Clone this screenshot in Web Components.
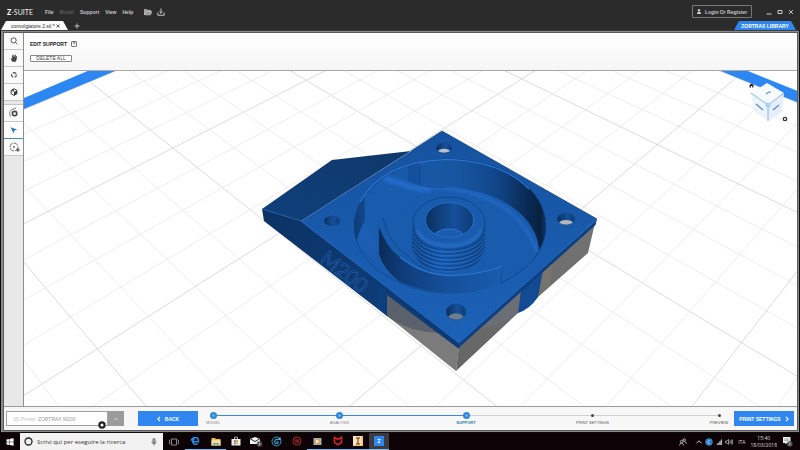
<!DOCTYPE html>
<html lang="en">
<head>
<meta charset="utf-8">
<title>Z-SUITE</title>
<style>
    html, body { margin: 0; height: 100%; }
    body {
        display: flex;
        flex-direction: column;
        overflow: hidden;
        background: #2b2b2b;
        font-family: "Liberation Sans", Arial, sans-serif;
        font-size: 5px;
        line-height: 8px;
    }
    app-window { flex: 1; min-height: 0; }
</style>
</head>
<body>
    <title-bar></title-bar>
    <tab-strip></tab-strip>
    <app-window>
        <tool-rail slot="rail"></tool-rail>
        <edit-header slot="header"></edit-header>
        <model-viewport slot="view"></model-viewport>
        <nav-cube slot="overlay"></nav-cube>
        <step-bar slot="footer"></step-bar>
    </app-window>
    <task-bar></task-bar>

<script>
// Shared button reset, every shadow root gets it
const RESET = `
    :host, *, *::before, *::after { box-sizing: border-box; }
    button, input, select {
        font: inherit; color: inherit; line-height: inherit;
        margin: 0; padding: 0; border: 0; border-radius: 0;
        background: none; outline: 0; appearance: none;
        white-space: nowrap;
    }
    a { color: inherit; text-decoration: none; }
    svg { display: block; }
`;

function define(name, css, html) {
    customElements.define(name, class extends HTMLElement {
        constructor() {
            super();
            this.attachShadow({ mode: 'open' });
            this.shadowRoot.innerHTML = `<style>${RESET}${css}</style>${typeof html === 'function' ? html() : html}`;
        }
    });
}

define('title-bar', `
    :host { display: flex; align-items: center; height: 21px; padding: 2px 6px 0 7px; background: #2b2b2b; color: #c4c4c4; }
    .logo { font-family: "Lato", "Liberation Sans", sans-serif; font-size: 7px; color: #eee; margin-right: 12px; }
    .logo b { font-weight: 900; color: #fff; }
    nav { display: flex; gap: 6px; font-weight: 700; }
    nav .off { color: #5c5c5c; }
    .files { display: flex; gap: 5px; margin-left: 11px; }
    .login { display: flex; align-items: center; justify-content: center; gap: 4px; width: 60px; height: 13px; margin-left: auto; border: 1px solid #777; border-radius: 1px; font-weight: 700; }
    .win { display: flex; gap: 5px; margin-left: 14px; }
`, `
    <div class="logo"><b>Z</b>-SUITE</div>
    <nav>
        <button>File</button><button class="off">Model</button><button>Support</button><button>View</button><button>Help</button>
    </nav>
    <div class="files">
        <button aria-label="Open"><svg width="8" height="8" viewBox="0 0 8 8"><path d="M.5 6.8V1.4h2.2l.8.9h3v1.1M.7 6.8l1.5-3.2h5.6L6.5 6.8z" fill="#999" stroke="#c9c9c9" stroke-width=".7"/></svg></button>
        <button aria-label="Save"><svg width="8" height="8" viewBox="0 0 8 8" fill="none" stroke="#c9c9c9"><path d="M.8 4.6v2.6h6.4V4.6M4 .5v4.6M2.4 3.6 4 5.2l1.6-1.6"/></svg></button>
    </div>
    <button class="login">
        <svg width="4" height="5" viewBox="0 0 4 5" fill="#d0d0d0"><circle cx="2" cy="1.2" r="1.2"/><path d="M0 5c0-1.4.6-2.2 2-2.2S4 3.6 4 5z"/></svg>
        Login Or Register
    </button>
    <div class="win">
        <button aria-label="Minimize"><svg width="6" height="6" viewBox="0 0 6 6"><path d="M.5 5h5" stroke="#ccc"/></svg></button>
        <button aria-label="Maximize"><svg width="6" height="6" viewBox="0 0 6 6"><path d="M1 1.5h4v3H1z" fill="none" stroke="#ccc"/></svg></button>
        <button aria-label="Close"><svg width="6" height="6" viewBox="0 0 6 6"><path d="m1 1 4 4m0-4L1 5" stroke="#ccc" stroke-width=".9"/></svg></button>
    </div>
`);

define('tab-strip', `
    :host { display: flex; align-items: stretch; height: 9px; padding: 0 4px 0 1px; background: #2b2b2b; }
    .tab { display: flex; align-items: center; justify-content: space-between; width: 67px; padding: 0 8px 0 10px; white-space: nowrap; background: #fafafa; color: #333; clip-path: polygon(5px 0, 62px 0, 100% 100%, 0 100%); }
    .plus { margin-left: 6px; }
    .library { display: flex; align-items: center; justify-content: center; width: 62px; margin-left: auto; background: #2e86ee; color: #fff; font-weight: 700; white-space: nowrap; clip-path: polygon(5px 0, 57px 0, 100% 100%, 0 100%); }
`, `
    <div class="tab">convolgiatore 2.stl *
        <button aria-label="Close tab"><svg width="4" height="4" viewBox="0 0 4 4"><path d="m.5.5 3 3m0-3-3 3" stroke="#333" stroke-width=".8"/></svg></button>
    </div>
    <button class="plus" aria-label="New tab"><svg width="6" height="6" viewBox="0 0 6 6"><path d="M3 .5v5M.5 3h5" stroke="#ccc" stroke-width=".9"/></svg></button>
    <a class="library" href="#library">ZORTRAX LIBRARY</a>
`);

define('app-window', `
    :host { display: flex; flex-direction: column; border: 1px solid #0c0c0c; border-top-color: #3a3a3a; background: #8a8a8a; padding: 1px 1px 1px 2px; }
    .inner { flex: 1; min-height: 0; display: flex; flex-direction: column; border: 1px solid #5a5a5a; background: #fff; }
    .main { flex: 1; min-height: 0; display: flex; }
    .work { flex: 1; min-width: 0; display: flex; flex-direction: column; border-left: 1px solid #8e8e8e; position: relative; }
    ::slotted([slot=view]) { flex: 1; min-height: 0; }
    ::slotted([slot=overlay]) { position: absolute; right: 7px; top: 47px; }
`, `
    <div class="inner">
        <div class="main">
            <slot name="rail"></slot>
            <div class="work"><slot name="header"></slot><slot name="view"></slot><slot name="overlay"></slot></div>
        </div>
        <slot name="footer"></slot>
    </div>
`);

define('tool-rail', `
    :host { display: flex; flex-direction: column; width: 19px; background: #e8e8e8; }
    button { display: flex; align-items: center; justify-content: center; height: 17px; background: #fafafa; border-bottom: 1px solid #c6c6c6; }
    .gap { height: 4px; border-bottom: 1px solid #c6c6c6; }
    .on { border-bottom: 1px solid #3f93b5; background: #fff; }
`, `
    <button aria-label="Zoom"><svg width="10" height="10" viewBox="0 0 10 10" fill="none" stroke="#444" stroke-width=".9"><circle cx="4.6" cy="4.4" r="2.6"/><path d="m6.5 6.4 1.8 1.9"/></svg></button>
    <button aria-label="Pan"><svg width="10" height="10" viewBox="0 0 10 10" fill="#444"><path d="M3.3 8.8 1.5 5.6l.8-.4.9.9L3 2.3l.8-.1.5 2.2.1-3h.8l.3 3 .6-2.7.8.1-.2 3 .8-1.8.7.3-.6 3.3-.9 2.2z"/></svg></button>
    <button aria-label="Rotate"><svg width="10" height="10" viewBox="0 0 10 10" fill="none" stroke="#444" stroke-width="1.1"><circle cx="5" cy="5" r="2.400" stroke-dasharray="3.770 1.250" stroke-dashoffset="1"/></svg></button>
    <button aria-label="View"><svg width="10" height="10" viewBox="0 0 10 10"><path d="m5 1.8 2.9 1.6v3.3L5 8.4 2.1 6.7V3.4z" fill="#fff" stroke="#333"/><path d="M5 5 7.9 3.4v3.3L5 8.4z" fill="#333"/><path d="m2.1 3.4 2.9-1.6L5 5z" fill="#555"/></svg></button>
    <div class="gap"></div>
    <button aria-label="Support settings"><svg width="12" height="12" viewBox="0 0 12 12" fill="none" stroke="#444"><circle cx="6.6" cy="6.6" r="2.2" stroke-width="1.6"/><path d="M2.6 9.6A4.8 4.8 0 0 1 6 1.9M6 1.9l2-.9" stroke-width=".7"/></svg></button>
    <button class="on" aria-label="Select"><svg width="10" height="10" viewBox="0 0 10 10"><path d="m1.600 2.200 6.600 2.400-2.700.9-1 2.900z" fill="#2f7fb0"/></svg></button>
    <button aria-label="Add support"><svg width="12" height="12" viewBox="0 0 12 12" fill="none" stroke="#555" stroke-width=".8"><circle cx="6" cy="6" r="4" stroke-dasharray="5 1"/><circle cx="6" cy="6" r=".5" fill="#333"/><path d="M8 9h4M10 7v4" stroke="#333"/></svg></button>
`);

define('edit-header', `
    :host { display: flex; flex-direction: column; align-items: flex-start; gap: 7px; height: 38px; padding: 7px 6px 0; background: linear-gradient(#fff, #f6f6f6); border-bottom: 1px solid #a8a8a8; }
    h1 { display: flex; align-items: center; gap: 4px; margin: 0; font-size: 5px; line-height: 8px; color: #222; }
    .help { width: 6px; height: 6px; border: 1px solid #777; border-radius: 1px; font-size: 4px; line-height: 4px; color: #333; }
    .del { width: 42px; height: 7px; border: 1px solid #888; border-radius: 1px; background: #fff; line-height: 5px; color: #444; }
`, `
    <h1>EDIT SUPPORT <button class="help" aria-label="Help">?</button></h1>
    <button class="del">DELETE ALL</button>
`);

// The build plate in perspective. Each line family runs to its own
// vanishing point and crosses y = 405 at even steps.
function plateLines(vx, vy, start, step, from, to) {
    let minor = '';
    let major = '';
    for (let i = from; i <= to; i++) {
        const x = start + step * i;
        const t = (60 - vy) / (405 - vy);
        const u = (600 - vy) / (405 - vy);
        const d = `M${(vx + (x - vx) * t).toFixed(1)} 60L${(vx + (x - vx) * u).toFixed(1)} 600`;
        if (i % 4 === 0) major += d; else minor += d;
    }
    return `<path d="${minor}" stroke="#e9e9e9"/><path d="${major}" stroke="#d2d2d2"/>`;
}

function thread(y) {
    return `<path d="M413 ${y}C416 ${y + 27} 482 ${y + 27} 485 ${y}" stroke="#0d3f80" stroke-width="1.2"/>
            <path d="M413 ${y + 2}C416 ${y + 28} 482 ${y + 28} 485 ${y + 2}" stroke="#2a74d0" stroke-width=".7"/>`;
}

function screwHole(x, y, rx, ry, bottom) {
    return `<clipPath id="h${x}"><ellipse cx="${x}" cy="${y}" rx="${rx}" ry="${ry}"/></clipPath>
        <ellipse cx="${x}" cy="${y}" rx="${rx}" ry="${ry}" fill="url(#hole)"/>
        ${bottom ? `<ellipse cx="${x}" cy="${y + ry * .8}" rx="${rx * .8}" ry="${ry * .65}" fill="${bottom}" clip-path="url(#h${x})"/>` : ''}
        <ellipse cx="${x}" cy="${y}" rx="${rx}" ry="${ry}" fill="none" stroke="#124b93" stroke-width=".6"/>`;
}

define('model-viewport', `
    :host { display: block; overflow: hidden; background: #fff; }
    svg { width: 100%; height: 100%; }
    text { font: 20px "Lato", "Liberation Sans", sans-serif; }
`, () => `
    <svg viewBox="24 70 773 337" preserveAspectRatio="xMidYMid slice">
        <defs>
            <linearGradient id="top" x1="0" y1="0" x2="0" y2="1"><stop offset="0" stop-color="#16529f"/><stop offset="1" stop-color="#1b62b8"/></linearGradient>
            <linearGradient id="ramp" x1="0" y1="1" x2="1" y2="0"><stop offset="0" stop-color="#0f3f7b"/><stop offset="1" stop-color="#0f3767"/></linearGradient>
            <linearGradient id="side" gradientUnits="userSpaceOnUse" x1="262" y1="210" x2="458" y2="345"><stop offset="0" stop-color="#0c3263"/><stop offset=".5" stop-color="#0d3a74"/><stop offset="1" stop-color="#0d3d7a"/></linearGradient>
            <linearGradient id="wall" gradientUnits="userSpaceOnUse" x1="354" y1="0" x2="546" y2="0"><stop offset="0" stop-color="#0d3b75"/><stop offset=".06" stop-color="#134a90"/><stop offset=".14" stop-color="#195aab"/><stop offset=".55" stop-color="#17559f"/><stop offset=".74" stop-color="#11468a"/><stop offset=".9" stop-color="#0a2b56"/><stop offset=".97" stop-color="#08213f"/><stop offset="1" stop-color="#0c3467"/></linearGradient>
            <linearGradient id="scroll" gradientUnits="userSpaceOnUse" x1="379" y1="0" x2="502" y2="0"><stop offset="0" stop-color="#0b2c58"/><stop offset=".18" stop-color="#0e3c79"/><stop offset=".55" stop-color="#154f9a"/><stop offset="1" stop-color="#1a5cae"/></linearGradient>
            <linearGradient id="hole"><stop offset="0" stop-color="#0b2f5e"/><stop offset=".6" stop-color="#15509a"/><stop offset="1" stop-color="#0d3a74"/></linearGradient>
            <linearGradient id="body"><stop offset="0" stop-color="#103f7e"/><stop offset=".4" stop-color="#1c63ba"/><stop offset="1" stop-color="#124888"/></linearGradient>
            <linearGradient id="gR" gradientUnits="userSpaceOnUse" x1="456" y1="360" x2="595" y2="225"><stop offset="0" stop-color="#666"/><stop offset="1" stop-color="#737373"/></linearGradient>
            <filter id="soft" x="-20%" y="-50%" width="140%" height="200%"><feGaussianBlur stdDeviation="1.6"/></filter>
            <clipPath id="bowl"><ellipse cx="450" cy="226" rx="96" ry="67"/></clipPath>
            <clipPath id="hub"><ellipse cx="449.500" cy="220" rx="24" ry="17.500"/></clipPath>
            <clipPath id="barrel"><path d="M413 222 412 248Q418 271 449 272 480 271 485 248V222z"/></clipPath>
        </defs>

        <g fill="none" stroke-width=".8">
            ${plateLines(-587, -458, 145, 87.5, -8, 24)}
            ${plateLines(1366, -458, 9, 85.5, -20, 20)}
        </g>
        <path d="M24 60v42L112 60zM720 60h90v40z" fill="#fff"/>
        <path d="M20 99.700 110 61.500h28L20 110.700zM700 62.500l100 41V92L728 63z" fill="#2d87f2"/>

        <!-- supports -->
        <path d="M386 290 459 346 456 371 386 315z" fill="#7b7b7b"/>
        <path d="M386 290 459 346 446 331Q414 334 387 316z" fill="#54606e"/>
        <path d="M387 294v22q22 17 57 17z" fill="#5a616b"/>
        <path d="M456 371 459 345 595 223 588 253 538 297 518 313z" fill="url(#gR)"/>
        <path d="M521 292 516 315Q496 327 480 328z" fill="#6b7078" opacity=".8"/>
        <path d="M541 273 539 296 550 285 553 262z" fill="#7d7870" opacity=".6"/>
        <path d="M521 290 543 270 538 297Q530 309 518 313z" fill="#134a94"/>

        <!-- ramp and left wall -->
        <path d="m262 209 70-49 79-9 31-20-141 90z" fill="url(#ramp)"/>
        <path d="m262 209 39 12 158 123v5l-72-54v21L264 221z" fill="url(#side)"/>
        <path d="m262 209 39 12" stroke="#1c5aa6" stroke-width=".8"/>
        <path d="m386 288 1 28-10-8V286z" fill="#0d3f80" opacity=".7"/>
        <text transform="translate(319 261) rotate(38)" fill="#0c3467" stroke="#2262b2" stroke-width=".6">M200</text>

        <!-- top plate -->
        <path d="M459 341 597 219 595.500 225 458.500 348z" fill="#0f3f7f"/>
        <path d="m301 221 158 121v6L301 223z" fill="#0d3a73"/>
        <path d="M442 131 597 219 459 343 301 221 411 151z" fill="url(#top)"/>
        <path d="M301 221 459 343 597 219.500" fill="none" stroke="#2267bd" stroke-width=".9"/>
        <path d="M411 151 442 131 597 219" fill="none" stroke="#0f3e7b" stroke-width=".7"/>

        <!-- bowl -->
        <ellipse cx="450" cy="226" rx="96" ry="67" fill="url(#wall)"/>
        <g clip-path="url(#bowl)">
            <ellipse cx="447" cy="252" rx="92" ry="64" fill="#195bad"/>
            <path d="M364 193Q366 215 364 226L357 250 395 300 420 240 400 190z" fill="#195bad"/>
            <path d="M368 190Q400 168 412 185L438 200 400 210z" fill="#195bad"/>
            <path d="M358 243Q360 226 365 222L376 240V262z" fill="#1a5fb4"/>
            <path d="M384 178Q396 182 408 186T430 189" fill="none" stroke="#246bcb" stroke-width="6" filter="url(#soft)"/>
            <path d="M418 188Q475 185 510 212 531 231 538 254" fill="none" stroke="#2469c6" stroke-width="3" filter="url(#soft)"/>
            <path d="M408 164v17q6 3 12 4V162" fill="#15509c"/>
            <path d="M420 166v19q12 3 26 2" fill="none" stroke="#12468a" stroke-width=".9"/>
            <path d="M538 253Q530 276 501 285" fill="none" stroke="#10458a" stroke-width=".8"/>
        </g>
        <ellipse cx="450" cy="226" rx="96" ry="67" fill="none" stroke="#10458a" stroke-width=".7"/>
        <path d="M360 202Q382 162 445 159.500 500 160 529 189" fill="none" stroke="#2b78d8" stroke-width="1.100"/>

        <!-- scroll vane -->
        <path d="M379 227Q388 250 400 257 422 275 450 276.500 478 276 502 267L501 284Q478 293 453 293 422 292 400 282 384 270 379 254z" fill="url(#scroll)"/>
        <path d="M383 218Q388 243 408 256 418 267 430 271" fill="none" stroke="#0f3f7f" stroke-width=".7"/>
        <path d="M400 257Q422 275 450 275.500 478 275 502 266.500" fill="none" stroke="#2a74d2" stroke-width="1.300"/>
        <path d="M502 267 501 284" stroke="#10458a" stroke-width=".7"/>

        <!-- threaded hub -->
        <g clip-path="url(#barrel)">
            <path d="M411 222h76v50h-76z" fill="url(#body)"/>
            <g fill="none">${[230, 234, 238, 242, 246, 250].map(thread).join('')}</g>
        </g>
        <ellipse cx="449" cy="223" rx="36" ry="26" fill="#195bac" stroke="#0f4384" stroke-width=".8"/>
        <path d="M417 230Q423 245 449 246 475 245 481 230" fill="none" stroke="#2870cc" stroke-width="3" filter="url(#soft)"/>
        <ellipse cx="449.500" cy="220" rx="24" ry="17.500" fill="url(#hole)"/>
        <ellipse cx="449" cy="240" rx="17" ry="11" fill="#1a5cad" stroke="#2b78d8" stroke-width=".9" clip-path="url(#hub)"/>
        <ellipse cx="449.500" cy="220" rx="24" ry="17.500" fill="none" stroke="#2a74d2" stroke-width=".8"/>

        ${screwHole(444, 148, 8, 5, '#b9c1cc')}
        ${screwHole(566, 219, 9, 6, '#b4b8bd')}
        ${screwHole(332, 221, 8, 5, '')}
        ${screwHole(456, 312, 10, 8, '#6f7d8e')}
    </svg>
`);

define('nav-cube', `
    :host { display: block; }
`, `
    <svg width="42" height="44" viewBox="748 80 42 44">
        <path d="m767 83 17 10-16 12-17-12z" fill="#f7fafd"/>
        <path d="m751 93 17 12v16l-14-10z" fill="#edf4fb"/>
        <path d="m784 93-16 12v16l14-9z" fill="#e6eff9"/>
        <path d="m751 93 17 12 16-12M768 105v16" fill="none" stroke="#6fa9dc" stroke-width=".8"/>
        <path d="m756 104 7 6M773 110l6-5M766 94l3-2 2 0" fill="none" stroke="#4d8dc4" stroke-width="1.100"/>
        <circle cx="768" cy="105" r="2.500" fill="#a9cff2"/>
        <path d="M749.500 87.500V85l2-1.500 2 1.500v2.500h-1.300V86h-1.300v1.500z" fill="#222"/>
        <circle cx="785" cy="119" r="1.700" fill="none" stroke="#333" stroke-width="1.300"/>
    </svg>
`);

define('step-bar', `
    :host { display: flex; align-items: center; height: 24px; padding: 0 3px 0 2px; background: #f7f7f7; border-top: 1px solid #9a9a9a; color: #555; }
    .printer { display: flex; width: 118px; height: 15px; position: relative; }
    label { flex: 1; display: flex; align-items: center; gap: 1px; padding-left: 6px; border: 1px solid #a0a0a0; background: #fff; color: #c6c6c6; }
    select { color: #999; }
    .open { display: flex; align-items: center; justify-content: center; width: 16px; background: #9b9b9b; }
    .gear { position: absolute; left: 92px; bottom: -3px; }
    .cta { display: flex; align-items: center; justify-content: center; gap: 4px; width: 60px; height: 15px; background: #2e86ee; color: #fff; font-weight: 700; }
    .back { margin-left: 14px; }
    ol { flex: 1; display: flex; justify-content: space-between; margin: 0; padding: 0; list-style: none; font-size: 4px; line-height: 6px;
        background: linear-gradient(90deg, #3a8bd0 50%, #cfcfcf 50%) center 3px / calc(100% - 30px) 1px no-repeat; }
    li { display: flex; flex-direction: column; align-items: center; gap: 1px; width: 30px; white-space: nowrap; }
    li::before { content: ""; width: 3px; height: 3px; margin: 2px; border-radius: 50%; background: #444; }
    .done::before, .now::before { width: 7px; height: 7px; margin: 0; background: radial-gradient(circle, #8ec0ee 0, #2e86d8 2px); }
    .done { color: #888; }
    .now { color: #2b7fa8; font-weight: 700; }
`, `
    <div class="printer">
        <label>3D Printer: <select><option>ZORTRAX M200</option></select></label>
        <button class="open" aria-label="Choose printer"><svg width="6" height="4" viewBox="0 0 6 4"><path d="m1 3 2-2 2 2" fill="none" stroke="#ddd" stroke-width=".8"/></svg></button>
        <button class="gear" aria-label="Printer settings"><svg width="8" height="8" viewBox="0 0 8 8"><circle cx="4" cy="4" r="2.600" fill="#fff" stroke="#222" stroke-width="2.200"/></svg></button>
    </div>
    <button class="cta back"><svg width="4" height="6" viewBox="0 0 4 6"><path d="M3 .8.9 3 3 5.200" fill="none" stroke="#fff" stroke-width="1.100"/></svg>BACK</button>
    <ol>
        <li class="done">MODEL</li><li class="done">ANALYSIS</li><li class="now">SUPPORT</li><li>PRINT SETTINGS</li><li>PREVIEW</li>
    </ol>
    <button class="cta">PRINT SETTINGS<svg width="4" height="6" viewBox="0 0 4 6"><path d="M1 .8 3.100 3 1 5.200" fill="none" stroke="#fff" stroke-width="1.100"/></svg></button>
`);

define('task-bar', `
    :host { display: flex; height: 17px; background: #0d0307; color: #dcdcdc; font-family: "Open Sans", "Liberation Sans", sans-serif; }
    button { display: flex; align-items: center; justify-content: center; }
    .start { width: 20px; }
    .search { display: flex; align-items: center; width: 143px; padding: 0 6px 0 4px; gap: 4px; background: #f2f2f2; color: #444; font-size: 6px; line-height: 10px; }
    input { flex: 1; min-width: 0; }
    input::placeholder { color: #333; opacity: 1; }
    .view { width: 22px; }
    .apps { display: flex; width: 204px; }
    .apps button { flex: 1; border-bottom: 1px solid transparent; }
    .apps .run { border-color: #76b9ed; }
    .apps .cur { background: #3d3a40; }
    .tray { display: flex; align-items: center; gap: 2px; margin-left: auto; padding-right: 7px; }
    .people { margin-right: 6px; }
    .lang { margin: 0 3px; }
    time { display: block; text-align: center; line-height: 7px; margin-right: 3px; }
`, `
    <button class="start" aria-label="Start"><svg width="8" height="8" viewBox="0 0 8 8" fill="#fff"><path d="M.5 1.400 3.600.9v2.800H.5zM4 .8 7.600.3v3.400H4zM.5 4.200h3.100V7L.5 6.500zM4 4.200h3.600v3.500L4 7.100z"/></svg></button>
    <label class="search">
        <svg width="9" height="9" viewBox="0 0 9 9"><circle cx="4.500" cy="4.500" r="3.500" fill="none" stroke="#222" stroke-width="1.300"/></svg>
        <input type="text" aria-label="Cerca" placeholder="Scrivi qui per eseguire la ricerca">
        <svg width="6" height="8" viewBox="0 0 6 8" fill="none" stroke="#444" stroke-width=".7"><rect x="2" y=".5" width="2" height="4" rx="1" fill="#bbb"/><path d="M.8 3.500Q1 5.700 3 5.700T5.200 3.500M3 5.700v1.800"/></svg>
    </label>
    <button class="view" aria-label="Task view"><svg width="10" height="8" viewBox="0 0 10 8" fill="none" stroke="#aaa" stroke-width=".8"><path d="M2.500 1h5v6h-5zM1.200 2H.6v4h.6M8.800 2h.6v4h-.6"/></svg></button>
    <div class="apps">
        <button class="run" aria-label="Edge"><svg width="10" height="10" viewBox="0 0 10 10"><path d="M2.600 5.700H8.500Q8.700 1.500 5.200 1.500 2.100 1.500 1.300 4.700M2.600 5.700Q2.700 3.500 4.600 3.200M2.600 5.700Q3.200 9.300 8 7.900" fill="none" stroke="#2a8be0" stroke-width="1.500"/></svg></button>
        <button class="run" aria-label="File Explorer"><svg width="10" height="9" viewBox="0 0 10 9"><path d="M.5 1h3.500l1 1h4.500v6.500h-9z" fill="#e9b84e"/><path d="M.5 3.200h9v5.300h-9z" fill="#fbe08c"/><path d="M2.500 8.500V6h5v2.500h-1.500V7h-2v1.500z" fill="#3f9bdc"/></svg></button>
        <button aria-label="Store"><svg width="10" height="10" viewBox="0 0 10 10"><path d="M3.500 3V1.200h3V3" fill="none" stroke="#ddd" stroke-width=".8"/><path d="M.5 3h9v6.500h-9z" fill="#eee"/><path d="M3 4.200h1.800V6H3z" fill="#e5532d"/><path d="M5.200 4.200H7V6H5.200z" fill="#7cb72a"/><path d="M3 6.400h1.800v1.800H3z" fill="#2a8be0"/><path d="M5.200 6.400H7v1.800H5.200z" fill="#f3b513"/></svg></button>
        <button aria-label="Mail"><svg width="14" height="11" viewBox="0 0 14 11"><path d="m1 3 5-2 5 2v5H1z" fill="#f2f2f2"/><path d="m1.500 3 4.500 2.500L10.500 3" fill="none" stroke="#111" stroke-width=".9"/><circle cx="10.500" cy="8" r="2.700" fill="#555"/><path d="M10.500 6.800v2.400" stroke="#ddd" stroke-width=".7"/></svg></button>
        <button aria-label="CCleaner"><svg width="11" height="11" viewBox="0 0 11 11" fill="none"><circle cx="5.500" cy="5.500" r="4.500" stroke="#2a9fd0"/><path d="M7.300 3.700Q4.500 2.500 3.600 5.500 3.600 8.600 7 7.300V5.800H5.300" stroke="#35a9dc" stroke-width="1.100"/><path d="m6.500 3.500 3-2.500v3z" fill="#7ac8ea"/></svg></button>
        <button aria-label="Cut app"><svg width="10" height="10" viewBox="0 0 10 10" fill="none" stroke="#b3232a"><circle cx="5" cy="5" r="4"/><path d="M2.800 4.200h4.400M2.800 5.800h4.400M4 3v4M6 3v4" stroke-width=".8"/></svg></button>
        <button class="run" aria-label="Media player"><svg width="9" height="9" viewBox="0 0 9 9"><path d="M.5 1h8v7h-8z" fill="#9db3c5"/><path d="M1.800 2h5.400v5H1.800z" fill="#d9a04c"/><path d="m3.200 2.500 3 2-3 2z" fill="#fff"/></svg></button>
        <button class="run" aria-label="McAfee"><svg width="10" height="10" viewBox="0 0 10 10"><path d="M1.500 1.500 5 3.300l3.500-1.800v5L5 8.800 1.500 6.500z" fill="none" stroke="#c8262e" stroke-width="1.700"/></svg></button>
        <button class="run" aria-label="Inventor"><svg width="10" height="10" viewBox="0 0 10 10"><path d="M0 0h10v10H0z" fill="#f7c58a"/><path d="M0 0h8v9H0z" fill="#fde6c8"/><path d="M3 2h4M5 2v6M3 8h4" stroke="#a85d18" stroke-width="1.500"/></svg></button>
        <button class="run cur" aria-label="Z-SUITE"><svg width="10" height="10" viewBox="0 0 10 10"><path d="M0 0h10v10H0z" fill="#2e86ee"/><path d="M3.700 3.500h2.600L3.800 6.500h2.600" fill="none" stroke="#fff" stroke-width=".9"/></svg></button>
    </div>
    <div class="tray">
        <button class="people" aria-label="People"><svg width="8" height="8" viewBox="0 0 8 8" fill="none" stroke="#ccc" stroke-width=".8"><circle cx="2.600" cy="3.600" r="1.300"/><circle cx="5.200" cy="2" r="1.300"/><path d="M.5 7.500Q1 5 2.600 5T4.700 7.500M5.200 3.500Q7 3.700 7.300 5.700"/></svg></button>
        <button aria-label="Show hidden icons"><svg width="8" height="8" viewBox="0 0 8 8"><path d="M1.500 5.300 4 2.800l2.500 2.500" fill="none" stroke="#ddd" stroke-width=".9"/></svg></button>
        <button aria-label="CCleaner status"><svg width="8" height="8" viewBox="0 0 8 8"><circle cx="4" cy="4" r="3.300" fill="#1b6fb5" stroke="#4aa7e6" stroke-width=".8"/><path d="M5.300 2.800Q2.700 2 2.700 4t2.600 1.200" fill="none" stroke="#cfe6f8" stroke-width=".8"/></svg></button>
        <button aria-label="Network"><svg width="8" height="8" viewBox="0 0 8 8"><path d="M1 7 7 1v6z" fill="#777"/><path d="M3 7V5.200M5 7V3.300M6.600 7V1.500" stroke="#ccc" stroke-width=".8"/></svg></button>
        <button aria-label="Volume"><svg width="8" height="8" viewBox="0 0 8 8" fill="none" stroke="#ccc" stroke-width=".7"><path d="M.6 3v2h1.200L3.500 6.500v-5L1.800 3zM4.700 2.800q.8 1.200 0 2.400M5.900 2q1.400 2 0 4M7 1.300q1.800 2.700 0 5.400"/></svg></button>
        <span class="lang">ITA</span>
        <time datetime="2018-03-18T15:40">15:40<br>18/03/2018</time>
        <button aria-label="Notifications"><svg width="11" height="11" viewBox="0 0 11 11"><path d="M1 1h7.500v6H5L3.500 8.500V7H1z" fill="#eee"/><path d="M2.300 3h5M2.300 4.700h5" stroke="#777" stroke-width=".6"/><circle cx="7.800" cy="8" r="2.700" fill="#555"/><path d="M7.800 6.800v2.400" stroke="#eee" stroke-width=".7"/></svg></button>
    </div>
`);
</script>
</body>
</html>
